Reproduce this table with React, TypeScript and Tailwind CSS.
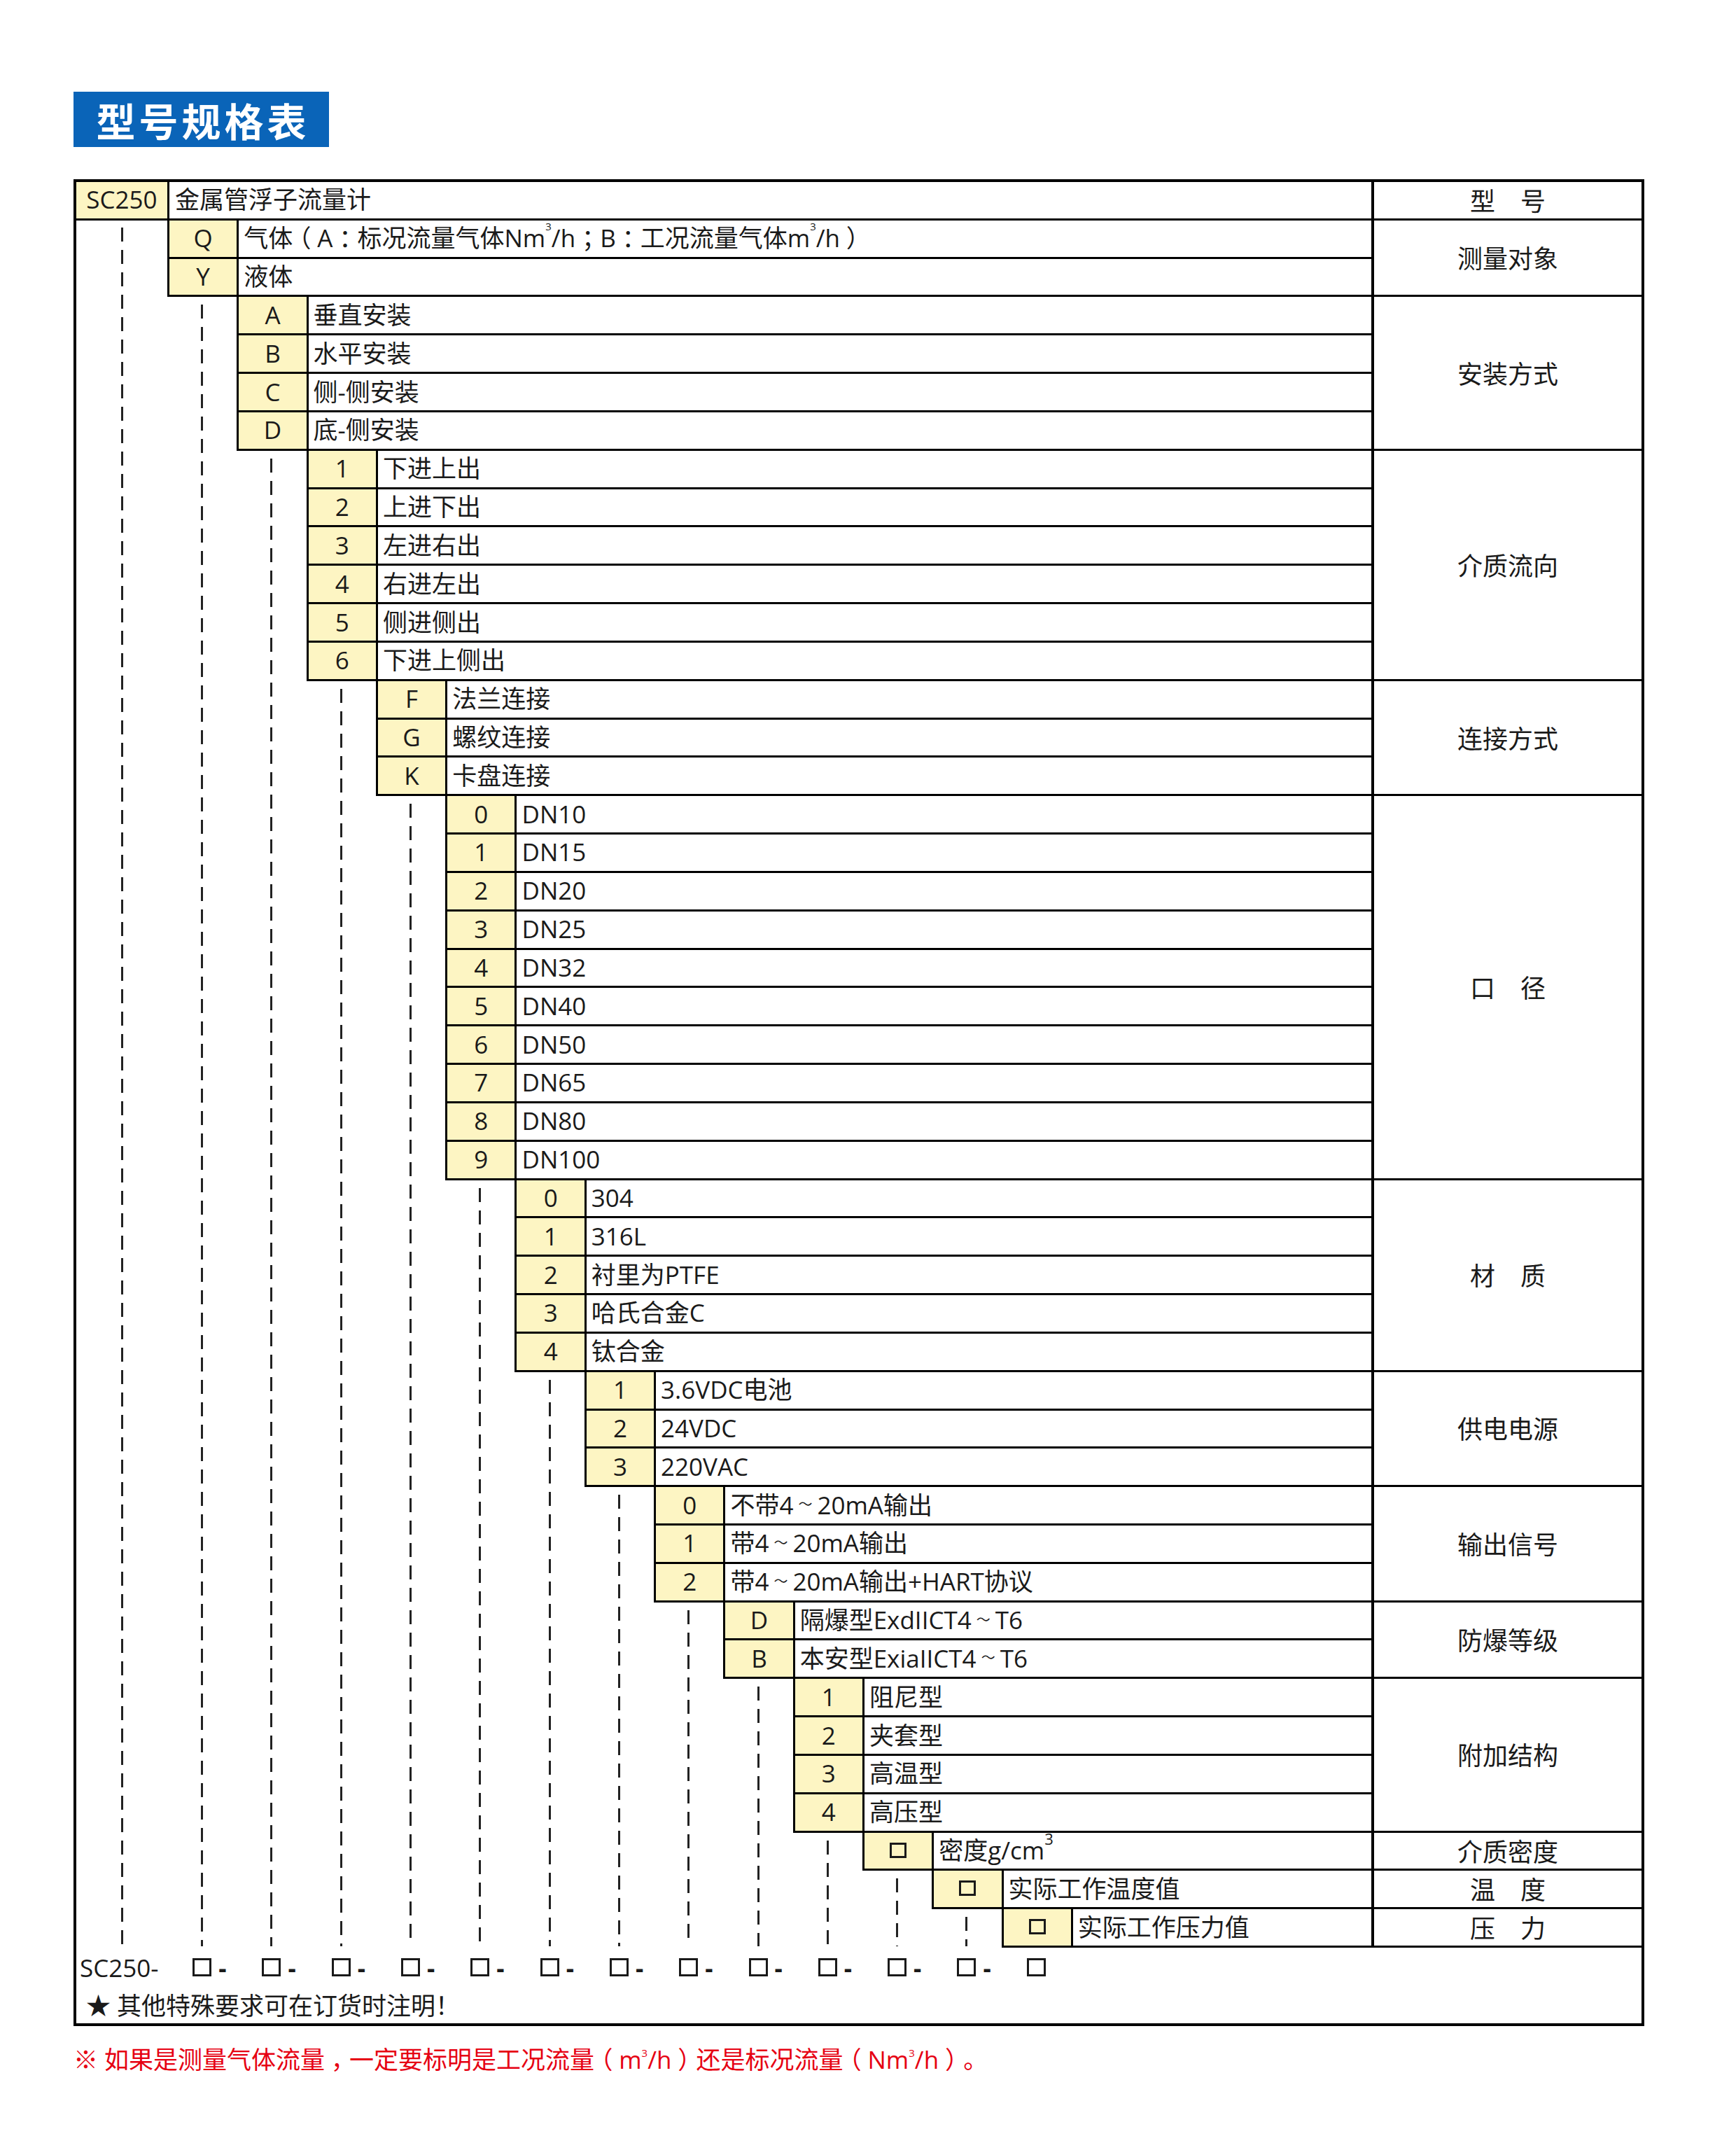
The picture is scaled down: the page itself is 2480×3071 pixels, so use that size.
import type { ReactNode } from 'react'

type Level = { label: string; items: [ReactNode, ReactNode][] }

function Sup({ big }: { big?: boolean }) {
  return big ? (
    <sup className="top-[-17px] text-[22px]">3</sup>
  ) : (
    <sup className="top-[-17px] text-[15px]">3</sup>
  )
}

// full-width punctuation set half-width and centred in its em box, as on the printed sheet
function Pn({ c }: { c: string }) {
  return <span className="inline-block px-[0.25em] [font-feature-settings:'halt']">{c}</span>
}
function Tilde() {
  return <span className="inline-block w-[34px] text-center text-[20px]">～</span>
}

function Box({ big }: { big?: boolean }) {
  return big ? (
    <span className="inline-block h-[26px] w-[27px] border-[3px] border-[#1a1a1a]" />
  ) : (
    <span className="inline-block h-[22px] w-[24px] border-[3px] border-[#1a1a1a]" />
  )
}

const levels: Level[] = [
  {
    label: '测量对象',
    items: [
      [
        'Q',
        <>
          气体<Pn c="（" />A<Pn c="：" />标况流量气体Nm<Sup />/h<Pn c="；" />B<Pn c="：" />工况流量气体m<Sup />/h<Pn c="）" />
        </>,
      ],
      ['Y', '液体'],
    ],
  },
  {
    label: '安装方式',
    items: [
      ['A', '垂直安装'],
      ['B', '水平安装'],
      ['C', '侧-侧安装'],
      ['D', '底-侧安装'],
    ],
  },
  {
    label: '介质流向',
    items: [
      ['1', '下进上出'],
      ['2', '上进下出'],
      ['3', '左进右出'],
      ['4', '右进左出'],
      ['5', '侧进侧出'],
      ['6', '下进上侧出'],
    ],
  },
  {
    label: '连接方式',
    items: [
      ['F', '法兰连接'],
      ['G', '螺纹连接'],
      ['K', '卡盘连接'],
    ],
  },
  {
    label: '口　径',
    items: [
      ['0', 'DN10'],
      ['1', 'DN15'],
      ['2', 'DN20'],
      ['3', 'DN25'],
      ['4', 'DN32'],
      ['5', 'DN40'],
      ['6', 'DN50'],
      ['7', 'DN65'],
      ['8', 'DN80'],
      ['9', 'DN100'],
    ],
  },
  {
    label: '材　质',
    items: [
      ['0', '304'],
      ['1', '316L'],
      ['2', '衬里为PTFE'],
      ['3', '哈氏合金C'],
      ['4', '钛合金'],
    ],
  },
  {
    label: '供电电源',
    items: [
      ['1', '3.6VDC电池'],
      ['2', '24VDC'],
      ['3', '220VAC'],
    ],
  },
  {
    label: '输出信号',
    items: [
      ['0', <>不带4<Tilde />20mA输出</>],
      ['1', <>带4<Tilde />20mA输出</>],
      ['2', <>带4<Tilde />20mA输出+HART协议</>],
    ],
  },
  {
    label: '防爆等级',
    items: [
      ['D', <>隔爆型ExdIICT4<Tilde />T6</>],
      ['B', <>本安型ExiaIICT4<Tilde />T6</>],
    ],
  },
  {
    label: '附加结构',
    items: [
      ['1', '阻尼型'],
      ['2', '夹套型'],
      ['3', '高温型'],
      ['4', '高压型'],
    ],
  },
  {
    label: '介质密度',
    items: [
      [
        <Box key="b" />,
        <>
          密度g/cm<Sup big />
        </>,
      ],
    ],
  },
  { label: '温　度', items: [[<Box key="b" />, '实际工作温度值']] },
  { label: '压　力', items: [[<Box key="b" />, '实际工作压力值']] },
]

const LAST = 16
const BOX_ROW = 47

export default function App() {
  let row = 2
  const blocks = levels.map((lv, i) => {
    const start = row
    row += lv.items.length
    return { ...lv, level: i + 1, start, end: row - 1 }
  })

  return (
    <div className="min-h-screen w-[2480px] bg-white pb-[100px] pl-[105px] pt-[131px] font-['Open_Sans','Noto_Sans_CJK_SC',sans-serif] text-[#1a1a1a]">
      <div className="flex h-[79px] w-[365px] items-center justify-center bg-[#0a64b8] pl-[5px] font-['Noto_Sans_CJK_SC',sans-serif] text-[56px] font-bold leading-none tracking-[5px] text-white">
        型号规格表
      </div>

      <div className="mt-[46px] grid w-[2244px] grid-cols-[130px_repeat(13,99.3px)_1fr_386px] grid-rows-[repeat(46,54.83px)_56px_52px] border-4 border-black text-[35px] leading-none">
        {/* header row */}
        <div
          className="flex items-center justify-center border-b-[3px] border-black bg-[#fdf5c3] pb-[2px]"
          style={{ gridColumn: '1 / 2', gridRow: '1 / 2' }}
        >
          SC250
        </div>
        <div
          className="flex items-center border-b-[3px] border-l-[3px] border-black pb-[2px] pl-[8px]"
          style={{ gridColumn: `2 / ${LAST}`, gridRow: '1 / 2' }}
        >
          金属管浮子流量计
        </div>
        <div
          className="flex items-center justify-center border-b-[3px] border-l-4 border-black pb-[2px] font-['Noto_Sans_CJK_SC',sans-serif] text-[36px]"
          style={{ gridColumn: `${LAST} / ${LAST + 1}`, gridRow: '1 / 2' }}
        >
          型　号
        </div>

        {/* dashed guide for SC250 */}
        <div
          className="flex justify-center pb-[2px] pt-[10px]"
          style={{ gridColumn: '1 / 2', gridRow: `2 / ${BOX_ROW}` }}
        >
          <div className="h-full w-[3px] bg-[repeating-linear-gradient(to_bottom,#222_0px,#222_20px,transparent_20px,transparent_32px)]" />
        </div>

        {blocks.map((b) => (
          <>
            {b.items.map(([code, desc], j) => (
              <>
                <div
                  key={`c${b.level}-${j}`}
                  className="flex items-center justify-center border-b-[3px] border-l-[3px] border-black bg-[#fdf5c3] pb-[2px]"
                  style={{ gridColumn: `${b.level + 1} / ${b.level + 2}`, gridRow: `${b.start + j} / ${b.start + j + 1}` }}
                >
                  {code}
                </div>
                <div
                  key={`d${b.level}-${j}`}
                  className="flex items-center whitespace-nowrap border-b-[3px] border-l-[3px] border-black pb-[2px] pl-[7px]"
                  style={{ gridColumn: `${b.level + 2} / ${LAST}`, gridRow: `${b.start + j} / ${b.start + j + 1}` }}
                >
                  {desc}
                </div>
              </>
            ))}
            <div
              key={`l${b.level}`}
              className="flex items-center justify-center border-b-[3px] border-l-4 border-black pb-[2px] font-['Noto_Sans_CJK_SC',sans-serif] text-[36px]"
              style={{ gridColumn: `${LAST} / ${LAST + 1}`, gridRow: `${b.start} / ${b.end + 1}` }}
            >
              {b.label}
            </div>
            {b.end + 1 < BOX_ROW && (
              <div
                key={`g${b.level}`}
                className="flex justify-center pb-[2px] pt-[11px]"
                style={{ gridColumn: `${b.level + 1} / ${b.level + 2}`, gridRow: `${b.end + 1} / ${BOX_ROW}` }}
              >
                <div className="h-full w-[3px] bg-[repeating-linear-gradient(to_bottom,#222_0px,#222_20px,transparent_20px,transparent_32px)]" />
              </div>
            )}
          </>
        ))}

        {/* order code row */}
        <div className="flex items-center pl-[5px]" style={{ gridColumn: '1 / 2', gridRow: `${BOX_ROW} / ${BOX_ROW + 1}` }}>
          SC250-
        </div>
        {blocks.map((b) => (
          <div
            key={`o${b.level}`}
            className="flex items-center justify-center"
            style={{ gridColumn: `${b.level + 1} / ${b.level + 2}`, gridRow: `${BOX_ROW} / ${BOX_ROW + 1}` }}
          >
            <span className="relative flex">
              <Box big />
              {b.level < 13 && (
                <span className="absolute left-full top-1/2 ml-[10px] -translate-y-1/2 font-bold">-</span>
              )}
            </span>
          </div>
        ))}

        {/* note row */}
        <div
          className="flex items-center pl-[14px]"
          style={{ gridColumn: `1 / ${LAST + 1}`, gridRow: `${BOX_ROW + 1} / ${BOX_ROW + 2}` }}
        >
          ★ 其他特殊要求可在订货时注明！
        </div>
      </div>

      <p className="mt-[30px] text-[35px] leading-none text-[#e60012]">
        ※ 如果是测量气体流量<Pn c="，" />一定要标明是工况流量<Pn c="（" />m<Sup />/h<Pn c="）" />还是标况流量<Pn c="（" />Nm<Sup />/h<Pn c="）" />。
      </p>
    </div>
  )
}
